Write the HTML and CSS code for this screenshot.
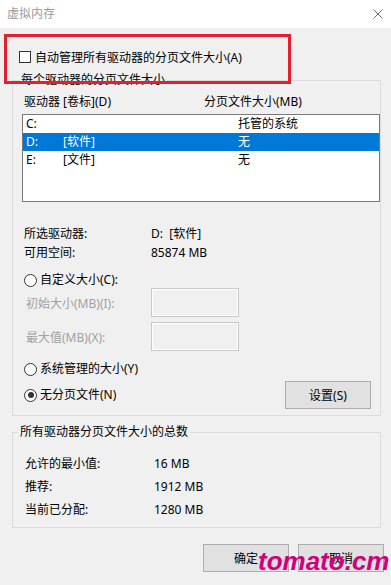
FILE: index.html
```html
<!DOCTYPE html>
<html>
<head>
  <meta charset="utf-8">
  <title>虚拟内存</title>
  <link rel="stylesheet" href="styles.css">
</head>
<body>
  <div class="window">
    <div class="titlebar">
      <span class="title">虚拟内存</span>
      <svg class="close" width="10" height="10" viewBox="0 0 10 10">
        <path d="M0.5 0.5 L9.5 9.5 M9.5 0.5 L0.5 9.5" stroke="#6b6b6b" stroke-width="1" fill="none"/>
      </svg>
    </div>

    <div class="content">
      <div class="auto-row">
        <span class="checkbox"></span>自动管理所有驱动器的分页文件大小(A)
      </div>

      <fieldset class="group drives">
        <legend>每个驱动器的分页文件大小</legend>
        <div class="list-head">
          <span>驱动器 [卷标](D)</span>
          <span>分页文件大小(MB)</span>
        </div>
        <div class="listbox">
          <div class="list-row"><span>C:</span><span></span><span>托管的系统</span></div>
          <div class="list-row selected"><span>D:</span><span>[软件]</span><span>无</span></div>
          <div class="list-row"><span>E:</span><span>[文件]</span><span>无</span></div>
        </div>

        <div class="info">
          <span>所选驱动器:</span><span>D:&nbsp;&nbsp;[软件]</span>
          <span>可用空间:</span><span>85874 MB</span>
        </div>

        <div class="radio-row custom"><span class="radio"></span>自定义大小(C):</div>
        <div class="size-row">
          <span class="disabled">初始大小(MB)(I):</span>
          <span class="textbox"></span>
        </div>
        <div class="size-row">
          <span class="disabled">最大值(MB)(X):</span>
          <span class="textbox"></span>
        </div>
        <div class="radio-row system"><span class="radio"></span>系统管理的大小(Y)</div>
        <div class="last-row">
          <div class="radio-row"><span class="radio checked"></span>无分页文件(N)</div>
          <button class="button">设置(S)</button>
        </div>
      </fieldset>

      <fieldset class="group totals">
        <legend>所有驱动器分页文件大小的总数</legend>
        <div class="totals-grid">
          <span>允许的最小值:</span><span>16 MB</span>
          <span>推荐:</span><span>1912 MB</span>
          <span>当前已分配:</span><span>1280 MB</span>
        </div>
      </fieldset>

      <div class="dialog-buttons">
        <button class="button">确定</button>
        <button class="button">取消</button>
      </div>
    </div>

    <div class="highlight"></div>
    <div class="watermark">tomato.cm</div>
  </div>
</body>
</html>
```

FILE: styles.css
```css
body {
  margin: 0;
  background: #f0f0f0;
  font-family: "Noto Sans", "Noto Sans CJK SC", sans-serif;
  font-size: 12px;
  color: #000;
}
.window {
  position: relative;
  width: 391px;
  height: 585px;
  overflow: hidden;
}
.titlebar {
  height: 28px;
  background: #fff;
  display: flex;
  align-items: center;
  justify-content: space-between;
  padding: 0 8px 0 7px;
}
.title {
  color: #999;
  line-height: 16px;
}
.content {
  padding-top: 20px;
}
.auto-row {
  display: flex;
  align-items: center;
  height: 18px;
  padding-left: 19px;
}
.checkbox {
  box-sizing: border-box;
  width: 12px;
  height: 12px;
  border: 1px solid #333;
  background: #fff;
  margin-right: 4px;
}
.group {
  margin: 0 10px 0 12px;
  border: 1px solid #dcdcdc;
  padding: 6px 0 6px 9px;
  min-width: 0;
}
.group legend {
  padding: 0 2px;
  line-height: 16px;
  margin-left: -3px;
}
.drives {
  margin-top: 6px;
}
.list-head {
  display: grid;
  grid-template-columns: 180px 1fr;
  padding-left: 2px;
  line-height: 16px;
}
.listbox {
  box-sizing: border-box;
  margin-top: 4px;
  height: 88px;
  background: #fff;
  border: 1px solid #7a7a7a;
}
.list-row {
  display: grid;
  grid-template-columns: 37px 175px 1fr;
  height: 18px;
  line-height: 18px;
  padding-left: 3px;
}
.list-row.selected {
  background: #0078d7;
  color: #fff;
}
.info {
  display: grid;
  grid-template-columns: 127px 1fr;
  margin-top: 22px;
  padding-left: 2px;
  line-height: 19px;
}
.radio-row {
  display: flex;
  align-items: center;
  height: 16px;
  line-height: 16px;
  padding-left: 2px;
}
.radio-row.custom {
  margin-top: 10px;
}
.radio-row.system {
  margin-top: 10px;
}
.radio {
  box-sizing: border-box;
  width: 13px;
  height: 13px;
  border: 1px solid #333;
  border-radius: 50%;
  background: #fff;
  margin-right: 3px;
  display: flex;
  align-items: center;
  justify-content: center;
}
.radio.checked::after {
  content: "";
  width: 6px;
  height: 6px;
  border-radius: 50%;
  background: #333;
}
.size-row {
  display: grid;
  grid-template-columns: 129px 88px;
  align-items: center;
  height: 29px;
  margin-bottom: 5px;
  padding-left: 0;
}
.size-row:last-of-type {
  margin-bottom: 0;
}
.disabled {
  color: #a0a0a0;
  padding-left: 4px;
}
.textbox {
  box-sizing: border-box;
  height: 29px;
  border: 1px solid #c8c8c8;
  box-shadow: inset 0 0 0 1px #fff;
}
.last-row {
  display: flex;
  align-items: center;
  justify-content: space-between;
  margin-top: 4px;
  padding-right: 9px;
}
.button {
  box-sizing: border-box;
  width: 86px;
  height: 28px;
  background: #e1e1e1;
  border: 1px solid #adadad;
  font-family: inherit;
  font-size: 12px;
  color: #000;
  padding: 0;
}
.totals {
  margin-top: 8px;
  padding: 12px 0 6px 12px;
}
.totals legend {
  margin-left: -7px;
}
.totals-grid {
  display: grid;
  grid-template-columns: 129px 1fr;
  line-height: 23px;
}
.dialog-buttons {
  display: flex;
  justify-content: flex-end;
  gap: 9px;
  margin-top: 16px;
  padding-right: 7px;
}
.highlight {
  position: absolute;
  left: 4px;
  top: 34px;
  width: 287px;
  height: 50px;
  box-sizing: border-box;
  border: 3px solid #e5202e;
}
.watermark {
  position: absolute;
  left: 258px;
  top: 548px;
  font-family: "Liberation Sans", Arial, sans-serif;
  font-size: 26px;
  line-height: 26px;
  font-weight: bold;
  font-style: italic;
  color: #d1007a;
}
```
